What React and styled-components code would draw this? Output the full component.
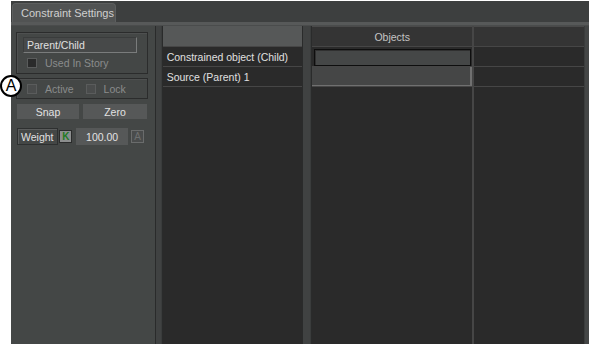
import React from "react";
import styled, { createGlobalStyle } from "styled-components";

const Global = createGlobalStyle`
  html, body {
    margin: 0;
    padding: 0;
    background: #ffffff;
    width: 589px;
    height: 344px;
    overflow: hidden;
  }
  body {
    font-family: "Liberation Sans", Arial, sans-serif;
    font-size: 10.5px;
  }
`;

const Page = styled.div`
  position: relative;
  padding: 1px 0 0 11px;
  height: 343px;
`;

const Panel = styled.div`
  display: flex;
  flex-direction: column;
  width: 578px;
  height: 343px;
  background: #444646;
`;

const TabBar = styled.div`
  display: flex;
  align-items: flex-end;
  height: 21px;
  background: #3d3f3f;
  padding-left: 1px;
`;

const Tab = styled.div`
  display: flex;
  align-items: center;
  width: 104px;
  height: 19px;
  box-sizing: border-box;
  padding-left: 8px;
  background: #515353;
  border: 1px solid #5c5e5e;
  border-bottom: none;
  border-radius: 4px 4px 0 0;
  color: #cfcfcf;
  font-size: 11px;
`;

const TabLine = styled.div`
  height: 3px;
  background: #575959;
  border-bottom: 1px solid #4a4c4c;
`;

const Body = styled.div`
  flex: 1;
  display: flex;
  min-height: 0;
`;

const Side = styled.div`
  width: 144px;
  box-sizing: border-box;
  padding: 6px 7px 0 5px;
  display: flex;
  flex-direction: column;
  background: #444746;
`;

const Group = styled.div`
  box-sizing: border-box;
  width: 132px;
  border: 1px solid #2b2c2c;
  box-shadow: inset 1px 1px 0 #4e5050;
  display: flex;
  flex-direction: ${(p) => (p.$row ? "row" : "column")};
  align-items: ${(p) => (p.$row ? "center" : "stretch")};
  padding: ${(p) => p.$pad};
  margin-bottom: ${(p) => p.$mb || 0}px;
  height: ${(p) => p.$h}px;
`;

const Field = styled.div`
  box-sizing: border-box;
  height: 16px;
  width: 114px;
  padding-left: 3px;
  display: flex;
  align-items: center;
  background: #474949;
  border-top: 1px solid #3a3c3c;
  border-left: 1px solid #3a3c3c;
  border-right: 1px solid #7a7c7c;
  border-bottom: 1px solid #7a7c7c;
  color: #e0e0e0;
`;

const CheckRow = styled.label`
  display: flex;
  align-items: center;
  gap: 8px;
  color: #8a8c8c;
  margin: ${(p) => p.$m || 0};
`;

const Box = styled.span`
  display: inline-block;
  width: 10px;
  height: 10px;
  box-sizing: border-box;
  background: ${(p) => (p.$dark ? "#2a2b2b" : "#4a4c4c")};
  border: 1px solid #5a5c5c;
`;

const ButtonRow = styled.div`
  display: flex;
  gap: 4px;
  margin: 5px 0 9px 1px;
`;

const Button = styled.div`
  width: ${(p) => p.$w}px;
  height: 15px;
  display: flex;
  align-items: center;
  justify-content: center;
  background: #565858;
  color: #e2e2e2;
`;

const WeightRow = styled.div`
  display: flex;
  align-items: center;
  height: 17px;
  margin-left: 1px;
`;

const WeightLabel = styled.div`
  box-sizing: border-box;
  width: 42px;
  height: 17px;
  padding-left: 3px;
  display: flex;
  align-items: center;
  border: 1px solid #2e3030;
  box-shadow: inset 1px 1px 0 #5a5c5c;
  color: #e0e0e0;
`;

const KeyBox = styled.div`
  box-sizing: border-box;
  width: 13px;
  height: 13px;
  margin: 0 4px 0 1px;
  display: flex;
  align-items: center;
  justify-content: center;
  font-size: 10px;
  background: ${(p) => (p.$on ? "#8c8e8e" : "#4a4c4c")};
  border: 1px solid ${(p) => (p.$on ? "#2a2b2b" : "#6a6c6c")};
  color: ${(p) => (p.$on ? "#1f7a1f" : "#6e7070")};
  font-weight: ${(p) => (p.$on ? "bold" : "normal")};
`;

const NumField = styled.div`
  width: 53px;
  height: 17px;
  display: flex;
  align-items: center;
  justify-content: center;
  background: #565858;
  color: #e2e2e2;
  margin-right: 2px;
`;

const Splitter = styled.div`
  width: ${(p) => p.$w}px;
  box-sizing: border-box;
  background: #404242;
  border-left: 1px solid #2a2b2b;
  border-right: 1px solid #2a2b2b;
  box-shadow: inset -1px 0 0 #3a3c3c;
`;

const Table = styled.div`
  width: ${(p) => p.$w}px;
  display: flex;
  flex-direction: column;
  background: #2a2a2a;
`;

const HeadRow = styled.div`
  display: flex;
  height: 20px;
  border-bottom: 1px solid #464646;
`;

const HeadCell = styled.div`
  width: ${(p) => p.$w}px;
  display: flex;
  align-items: center;
  justify-content: center;
  background: ${(p) => p.$bg};
  border-top: 1px solid ${(p) => p.$top};
  color: #c4c4c4;
`;

const Row = styled.div`
  display: flex;
  height: 19px;
  border-bottom: 1px solid #464646;
`;

const Cell = styled.div`
  width: ${(p) => p.$w}px;
  box-sizing: border-box;
  display: flex;
  align-items: center;
  padding-left: 4px;
  color: #e0e0e0;
  border-right: ${(p) => (p.$div ? "2px solid #464646" : "none")};
`;

const ObjInput = styled.div`
  flex: 1;
  height: 17px;
  box-sizing: border-box;
  margin: 1px 1px 0 -2px;
  background: #454747;
  border: 1px solid #0e0e0e;
  box-shadow: inset 1px 1px 0 #303030;
`;

const ObjSlot = styled.div`
  flex: 1;
  height: 19px;
  box-sizing: border-box;
  margin-left: -4px;
  background: #454646;
  border-right: 2px solid #707070;
  border-bottom: 1px solid #707070;
`;

const Fill = styled.div`
  flex: 1;
  display: flex;
`;

const FillCol = styled.div`
  width: ${(p) => p.$w}px;
  box-sizing: border-box;
  border-right: ${(p) => (p.$div ? "2px solid #464646" : "none")};
`;

const Edge = styled.div`
  width: 4px;
  background: #444646;
  border-left: 1px solid #3a3c3c;
`;

const Marker = styled.div`
  position: absolute;
  left: 0;
  top: 75px;
  width: 22px;
  height: 22px;
  box-sizing: border-box;
  border-radius: 50%;
  background: #ffffff;
  border: 2px solid #000000;
  display: flex;
  align-items: center;
  justify-content: center;
  font-family: "Liberation Sans", Arial, sans-serif;
  font-size: 16px;
  color: #000;
`;

export default function App() {
  return (
    <Page>
      <Global />
      <Panel>
        <TabBar>
          <Tab>Constraint Settings</Tab>
        </TabBar>
        <TabLine />
        <Body>
          <Side>
            <Group $h={42} $pad="4px 0 0 6px" $mb={4}>
              <Field>Parent/Child</Field>
              <CheckRow $m="4px 0 0 4px">
                <Box $dark />
                Used In Story
              </CheckRow>
            </Group>
            <Group $row $h={21} $pad="0 0 0 10px">
              <CheckRow>
                <Box />
                Active
              </CheckRow>
              <CheckRow $m="0 0 0 12px">
                <Box />
                Lock
              </CheckRow>
            </Group>
            <ButtonRow>
              <Button $w={62}>Snap</Button>
              <Button $w={64}>Zero</Button>
            </ButtonRow>
            <WeightRow>
              <WeightLabel>Weight</WeightLabel>
              <KeyBox $on>K</KeyBox>
              <NumField>100.00</NumField>
              <KeyBox>A</KeyBox>
            </WeightRow>
          </Side>
          <Splitter $w={8} />
          <Table $w={139}>
            <HeadRow>
              <HeadCell $w={139} $bg="#565858" $top="#565858" />
            </HeadRow>
            <Row>
              <Cell $w={139}>Constrained object (Child)</Cell>
            </Row>
            <Row>
              <Cell $w={139}>Source (Parent) 1</Cell>
            </Row>
          </Table>
          <Splitter $w={11} />
          <Table $w={272}>
            <HeadRow>
              <HeadCell $w={160} $bg="#343434" $top="#4a4a4a">
                Objects
              </HeadCell>
              <HeadCell $w={2} $bg="#464646" $top="#464646" />
              <HeadCell $w={110} $bg="#343434" $top="#4a4a4a" />
            </HeadRow>
            <Row>
              <Cell $w={162} $div>
                <ObjInput />
              </Cell>
              <Cell $w={110} />
            </Row>
            <Row>
              <Cell $w={162} $div>
                <ObjSlot />
              </Cell>
              <Cell $w={110} />
            </Row>
            <Fill>
              <FillCol $w={162} $div />
              <FillCol $w={110} />
            </Fill>
          </Table>
          <Edge />
        </Body>
      </Panel>
      <Marker>A</Marker>
    </Page>
  );
}
